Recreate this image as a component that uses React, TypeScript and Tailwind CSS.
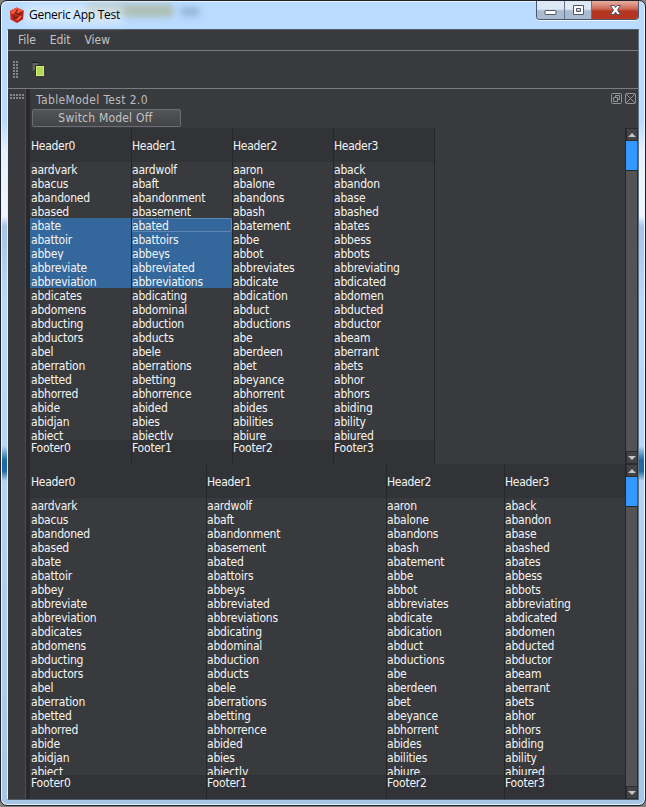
import React from "react";

const words: string[][] = [
  ["aardvark", "aardwolf", "aaron", "aback"],
  ["abacus", "abaft", "abalone", "abandon"],
  ["abandoned", "abandonment", "abandons", "abase"],
  ["abased", "abasement", "abash", "abashed"],
  ["abate", "abated", "abatement", "abates"],
  ["abattoir", "abattoirs", "abbe", "abbess"],
  ["abbey", "abbeys", "abbot", "abbots"],
  ["abbreviate", "abbreviated", "abbreviates", "abbreviating"],
  ["abbreviation", "abbreviations", "abdicate", "abdicated"],
  ["abdicates", "abdicating", "abdication", "abdomen"],
  ["abdomens", "abdominal", "abduct", "abducted"],
  ["abducting", "abduction", "abductions", "abductor"],
  ["abductors", "abducts", "abe", "abeam"],
  ["abel", "abele", "aberdeen", "aberrant"],
  ["aberration", "aberrations", "abet", "abets"],
  ["abetted", "abetting", "abeyance", "abhor"],
  ["abhorred", "abhorrence", "abhorrent", "abhors"],
  ["abide", "abided", "abides", "abiding"],
  ["abidjan", "abies", "abilities", "ability"],
  ["abject", "abjectly", "abjure", "abjured"],
];

function Arrow({ up = false }: { up?: boolean }) {
  return (
    <div className="flex h-[13px] w-[12px] shrink-0 items-center justify-center border border-[#2a2b2d] bg-[#424346]">
      <svg width="8" height="4" viewBox="0 0 8 4">
        <path d={up ? "M0 4L4 0L8 4Z" : "M0 0L4 4L8 0Z"} fill="#c4c4c4" />
      </svg>
    </div>
  );
}

function ScrollBar() {
  return (
    <div className="flex w-[13px] shrink-0 flex-col border-l border-[#252628] bg-[#525355]">
      <Arrow up />
      <div className="h-[29px] w-[11px] bg-[#3399ff]" />
      <div className="h-px bg-[#252628]" />
      <div className="flex-1 border-r border-[#2a2b2d]" />
      <Arrow />
    </div>
  );
}

function Column({ index, width, selectable, rowsHeight, last }: {
  index: number; width: string; selectable: boolean; rowsHeight: string; last: boolean;
}) {
  const pad = index === 0 ? "pl-px" : "pl-0";
  return (
    <div className={`${width} flex shrink-0 flex-col ${last ? "" : "border-r border-[#252628]"}`}>
      <div className={`h-[34px] bg-[#323336] ${pad} leading-[37px] tracking-[-0.3px]`}>Header{index}</div>
      <div className={`${rowsHeight} shrink-0 overflow-hidden`}>
        {words.map((row, r) => {
          const selected = selectable && index < 2 && r >= 4 && r <= 8;
          const current = selected && index === 1 && r === 4;
          return (
            <div key={r} className={`relative h-[14px] ${pad} leading-[17px] ${selected ? "bg-[#34689d]" : ""}`}>
              {row[index]}
              {current && <span className="absolute inset-0 rounded-[2px] border border-[#5c87b2]" />}
            </div>
          );
        })}
      </div>
      <div className={`flex-1 bg-[#323336] ${pad} leading-[16px]`}>Footer{index}</div>
    </div>
  );
}

function Table({ widths, height, rowsHeight, selectable = false, fill = false }: {
  widths: string[]; height: string; rowsHeight: string; selectable?: boolean; fill?: boolean;
}) {
  return (
    <div className={`flex ${height} shrink-0`}>
      <div className="flex flex-1 overflow-hidden font-['DejaVu_Sans_Condensed','DejaVu_Sans',sans-serif] text-[12px] tracking-[-0.2px] text-[#f4f4f4] [font-stretch:condensed]">
        {widths.map((w, i) => (
          <Column key={i} index={i} width={w} selectable={selectable} rowsHeight={rowsHeight} last={fill && i === 3} />
        ))}
      </div>
      <ScrollBar />
    </div>
  );
}

function Logo() {
  return (
    <svg width="16" height="17" viewBox="0 0 16 17" className="mt-px">
      <path d="M7.5 0.5L14.5 3.5L14 12L8 16L1.5 12.5L1 4Z" fill="#c82719" />
      <path d="M7.5 0.5L14.5 3.5L8 7L1 4Z" fill="#f0573b" />
      <path d="M8 7L14.5 3.5L14 12L8 16Z" fill="#b5241a" />
      <path d="M8.5 2.5L6.5 6L10.5 7.5L12.5 5.5M4.5 7.5L5.5 11.5L9 9.5" fill="none" stroke="#6e2018" strokeWidth="1.3" />
      <path d="M2 5L5 6.5M8 13L12 9" fill="none" stroke="#ff765a" strokeWidth="1.2" />
    </svg>
  );
}

function WindowButtons() {
  return (
    <div className="flex h-[19px] w-[103px] overflow-hidden rounded-b-[4px] border border-t-0 border-[#4c586b] shadow-[0_1px_0_#edf6ff]">
      <div className="flex w-[28px] justify-center border-r border-[#66758c] bg-linear-to-b from-[#dce8f4] from-45% to-[#a8bbd0] to-55%">
        <svg width="13" height="18" viewBox="0 0 13 18"><rect x="1" y="9.5" width="11" height="4" rx="0.5" fill="#fff" stroke="#535666" /></svg>
      </div>
      <div className="flex w-[27px] justify-center border-r border-[#66758c] bg-linear-to-b from-[#dce8f4] from-45% to-[#a8bbd0] to-55%">
        <svg width="13" height="18" viewBox="0 0 13 18"><path fillRule="evenodd" d="M1.5 4.5H11.5V13.5H1.5ZM4.5 7.5V10.5H8.5V7.5Z" fill="#fff" stroke="#535666" /></svg>
      </div>
      <div className="flex flex-1 justify-center bg-linear-to-b from-[#e5a99b] from-5% via-[#cc6654] via-45% to-[#b53520] to-55%">
        <svg width="13" height="18" viewBox="0 0 13 18"><path d="M1.5 4.5H5L6.5 6.5L8 4.5H11.5L8.5 9L11.5 13.5H8L6.5 11.2L5 13.5H1.5L4.5 9Z" fill="#fff" stroke="#535666" /></svg>
      </div>
    </div>
  );
}

function Grip({ cols, rows }: { cols: number; rows: number }) {
  const dots: React.ReactNode[] = [];
  for (let y = 0; y < rows; y++)
    for (let x = 0; x < cols; x++) dots.push(<rect key={`${x}-${y}`} x={x * 3} y={y * 3} width="2" height="2" fill="#85868a" />);
  return <svg width={cols * 3} height={rows * 3}>{dots}</svg>;
}

export default function App() {
  return (
    <div className="h-[807px] w-[646px] overflow-hidden bg-[#83827e] font-['DejaVu_Sans_Condensed','DejaVu_Sans',sans-serif]">
      <div className="flex h-[806px] w-[646px] flex-col rounded-[7px] border border-[#20222b] bg-[linear-gradient(180deg,#b9dbff_0px,#b9dbff_120px,#e6f0fc_150px,#f1f6fc_215px,#a7c3ea_225px,#b9d9fb_300px,#b8d8fb_445px,#1f6aa5_459px,#1f6aa5_470px,#b5d3f5_480px,#a6c6e8_806px)] pr-[6px] pl-[6px] shadow-[inset_0_0_0_1px_#eaf4ff]">
        <div className="flex h-[28px] shrink-0 justify-between">
          <div className="relative flex items-center pl-[2px]">
            <div className="absolute top-[3px] left-[80px] h-[13px] w-[86px] bg-[#a6ab83]/60 blur-[3px]" />
            <div className="absolute top-[6px] left-[174px] h-[9px] w-[18px] bg-[#7d9cbd]/60 blur-[3px]" />
            <div className="absolute top-[5px] left-[18px] h-[18px] w-[98px] bg-[#e4f1ff]/70 blur-[4px]" />
            <div className="relative flex items-center"><Logo /></div>
            <span className="relative ml-[4px] font-['Open_Sans',sans-serif] text-[12px] tracking-[-0.25px] text-black">Generic App Test</span>
          </div>
          <WindowButtons />
        </div>
        <div className="flex h-[771px] shrink-0 flex-col border border-t-[#545e6a] border-r-[#5d7287] border-b-[#515d69] border-l-[#e2efff] bg-[#393a3d]">
          <div className="flex h-[20px] shrink-0 items-center gap-[14px] pl-[10px] text-[12px] tracking-[-0.05px] text-[#c3c3c3] [font-stretch:condensed]">
            <span>File</span><span>Edit</span><span>View</span>
          </div>
          <div className="flex h-[39px] shrink-0 items-center gap-[13px] border-y border-[#7b7c7e] pl-[5px]">
            <Grip cols={2} rows={6} />
            <svg width="12" height="14" viewBox="0 0 12 14" className="relative -top-px">
              <rect x="0.5" y="0.5" width="6" height="8" fill="#626364" stroke="#48494a" />
              <path d="M0 0.5H7" stroke="#1e1f20" />
              <rect x="4.5" y="4.5" width="7" height="9" fill="#b3d656" stroke="#d1ed75" />
              <path d="M3.5 13.5V3.5H11" fill="none" stroke="#2b2c2d" />
            </svg>
          </div>
          <div className="flex min-h-0 flex-1">
            <div className="w-[17px] shrink-0 pt-[5px] pl-[2px]"><Grip cols={5} rows={2} /></div>
            <div className="w-[5px] shrink-0 border-l border-[#4c4d4f] bg-[#29292c]" />
            <div className="flex min-w-0 flex-1 flex-col">
              <div className="flex h-[18px] shrink-0 items-center justify-between pr-[2px] pl-[6px] text-[12px] text-[#bdbdbd] [font-stretch:condensed]">
                <span className="relative top-[2px] tracking-[0.35px]">TableModel Test 2.0</span>
                <svg width="25" height="11" viewBox="0 0 25 11" fill="none" stroke="#929395">
                  <rect x="0.5" y="0.5" width="10" height="10" rx="1" />
                  <path d="M2.5 4.5H6.5V8.5H2.5ZM4.5 4V2.5H8.5V6.5H7" />
                  <rect x="14.5" y="0.5" width="10" height="10" rx="1" />
                  <path d="M15 1L24 10M24 1L15 10" />
                </svg>
              </div>
              <div className="h-[21px] shrink-0 pt-[2px] pl-[2px]">
                <button className="block h-[18px] w-[149px] rounded-[2px] border border-[#6c6d70] bg-linear-to-b from-[#535457] to-[#434447] pr-[2px] text-[12px] leading-[17px] tracking-[0.2px] text-[#c3c3c3] [font-stretch:condensed]">Switch Model Off</button>
              </div>
              <Table height="h-[336px]" rowsHeight="h-[278px]" widths={["w-[102px]", "w-[101px]", "w-[101px]", "w-[101px]"]} selectable />
              <Table height="h-[335px]" rowsHeight="h-[277px]" widths={["w-[177px]", "w-[180px]", "w-[118px]", "w-[120px]"]} fill />
            </div>
          </div>
        </div>
      </div>
    </div>
  );
}
